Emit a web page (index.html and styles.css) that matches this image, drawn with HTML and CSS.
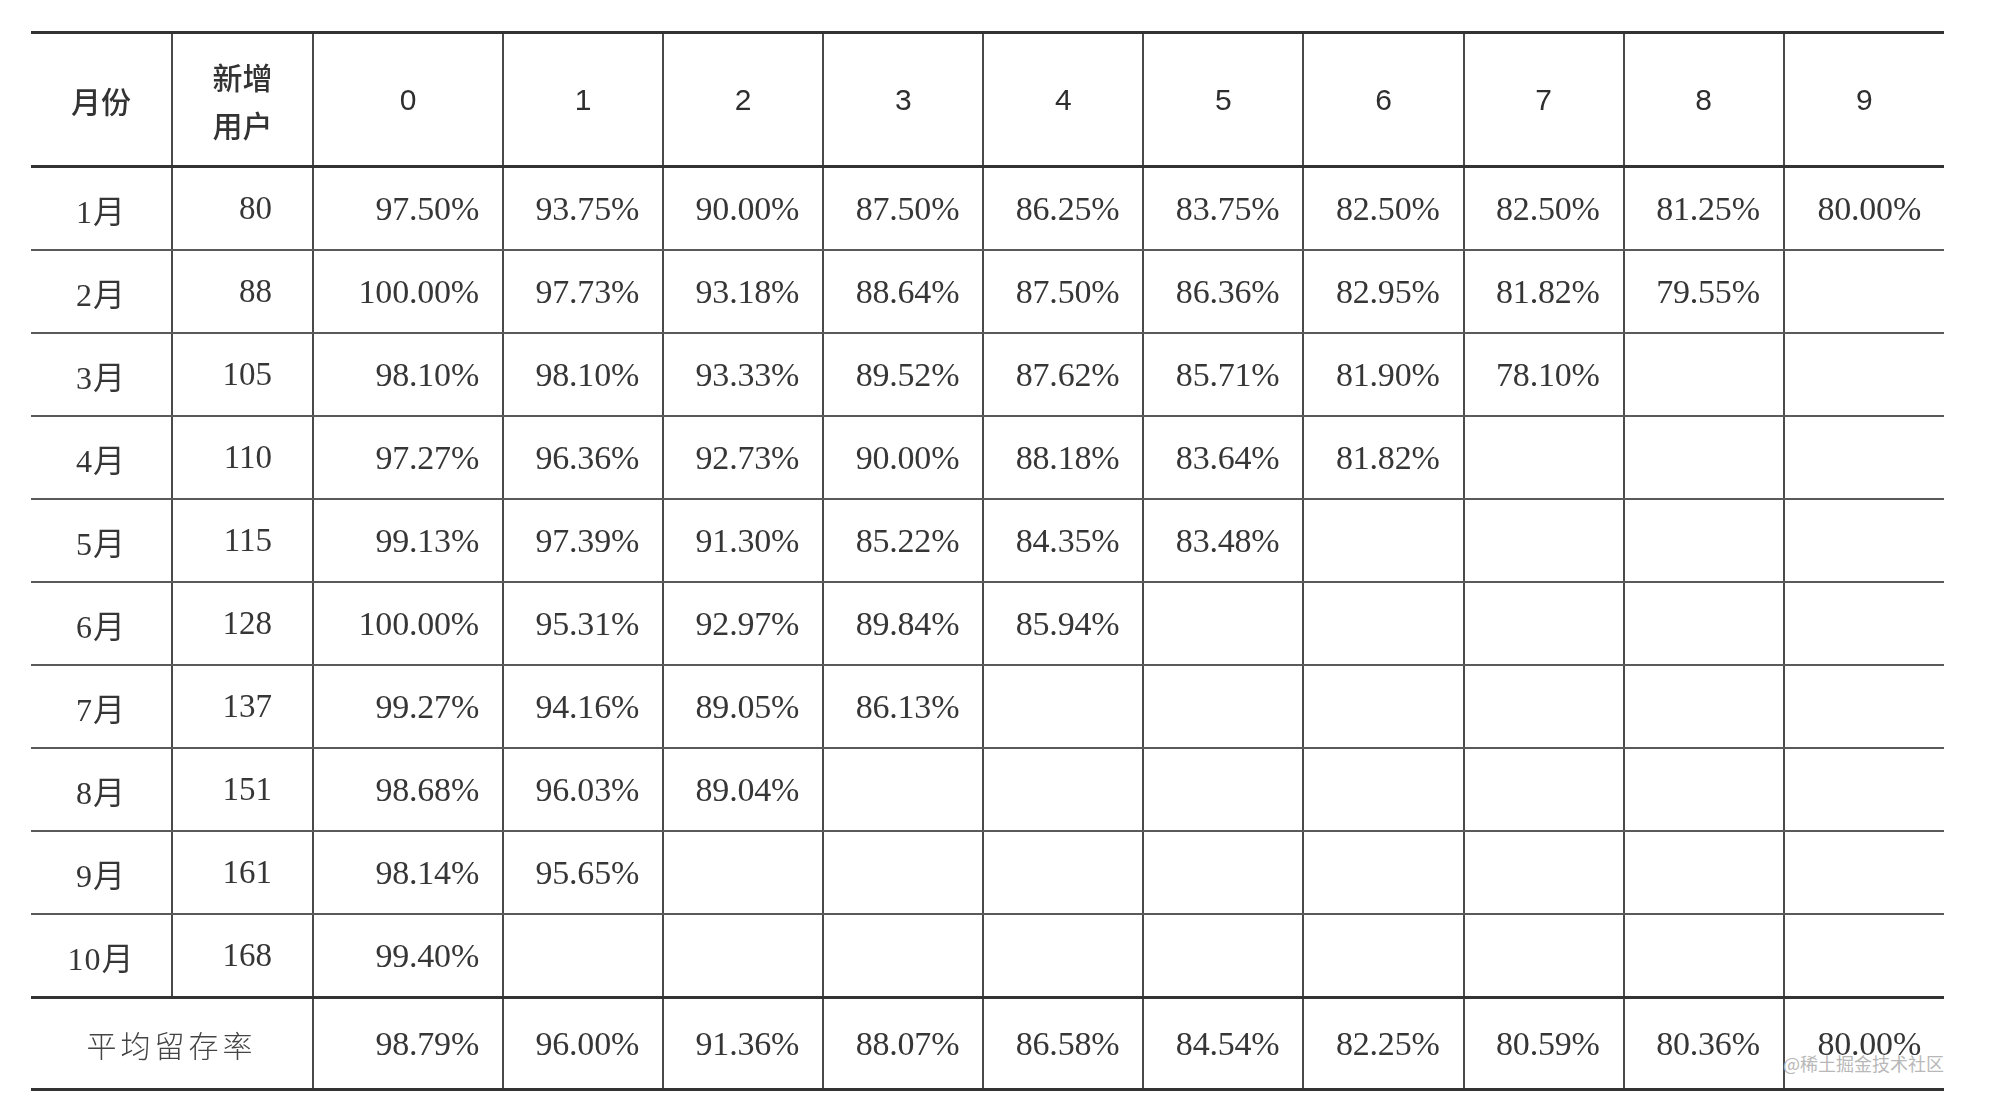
FILE: index.html
```html
<!DOCTYPE html>
<html lang="zh-CN">
<head>
<meta charset="utf-8">
<title>月份留存率</title>
<link rel="stylesheet" href="styles.css">
</head>
<body>
<div class="sheet">
<table class="retention">
  <colgroup>
    <col class="c-month"><col class="c-new"><col class="c-zero">
    <col class="c-n"><col class="c-n"><col class="c-n"><col class="c-n"><col class="c-n">
    <col class="c-n"><col class="c-n"><col class="c-n"><col class="c-n">
  </colgroup>
  <thead>
    <tr class="head">
      <th class="lbl">月份</th>
      <th class="lbl two">新增<br>用户</th>
      <th class="num-h lt">0</th>
      <th class="num-h">1</th>
      <th class="num-h">2</th>
      <th class="num-h">3</th>
      <th class="num-h">4</th>
      <th class="num-h">5</th>
      <th class="num-h">6</th>
      <th class="num-h lt">7</th>
      <th class="num-h">8</th>
      <th class="num-h last">9</th>
    </tr>
  </thead>
  <tbody>
    <tr><td class="m">1月</td><td class="u">80</td><td class="p lt">97.50%</td><td class="p">93.75%</td><td class="p">90.00%</td><td class="p">87.50%</td><td class="p">86.25%</td><td class="p">83.75%</td><td class="p">82.50%</td><td class="p lt">82.50%</td><td class="p">81.25%</td><td class="p last">80.00%</td></tr>
    <tr><td class="m">2月</td><td class="u">88</td><td class="p lt">100.00%</td><td class="p">97.73%</td><td class="p">93.18%</td><td class="p">88.64%</td><td class="p">87.50%</td><td class="p">86.36%</td><td class="p">82.95%</td><td class="p lt">81.82%</td><td class="p">79.55%</td><td class="p last"></td></tr>
    <tr><td class="m">3月</td><td class="u">105</td><td class="p lt">98.10%</td><td class="p">98.10%</td><td class="p">93.33%</td><td class="p">89.52%</td><td class="p">87.62%</td><td class="p">85.71%</td><td class="p">81.90%</td><td class="p lt">78.10%</td><td class="p"></td><td class="p last"></td></tr>
    <tr><td class="m">4月</td><td class="u">110</td><td class="p lt">97.27%</td><td class="p">96.36%</td><td class="p">92.73%</td><td class="p">90.00%</td><td class="p">88.18%</td><td class="p">83.64%</td><td class="p">81.82%</td><td class="p lt"></td><td class="p"></td><td class="p last"></td></tr>
    <tr><td class="m">5月</td><td class="u">115</td><td class="p lt">99.13%</td><td class="p">97.39%</td><td class="p">91.30%</td><td class="p">85.22%</td><td class="p">84.35%</td><td class="p">83.48%</td><td class="p"></td><td class="p lt"></td><td class="p"></td><td class="p last"></td></tr>
    <tr><td class="m">6月</td><td class="u">128</td><td class="p lt">100.00%</td><td class="p">95.31%</td><td class="p">92.97%</td><td class="p">89.84%</td><td class="p">85.94%</td><td class="p"></td><td class="p"></td><td class="p lt"></td><td class="p"></td><td class="p last"></td></tr>
    <tr><td class="m">7月</td><td class="u">137</td><td class="p lt">99.27%</td><td class="p">94.16%</td><td class="p">89.05%</td><td class="p">86.13%</td><td class="p"></td><td class="p"></td><td class="p"></td><td class="p lt"></td><td class="p"></td><td class="p last"></td></tr>
    <tr><td class="m">8月</td><td class="u">151</td><td class="p lt">98.68%</td><td class="p">96.03%</td><td class="p">89.04%</td><td class="p"></td><td class="p"></td><td class="p"></td><td class="p"></td><td class="p lt"></td><td class="p"></td><td class="p last"></td></tr>
    <tr><td class="m">9月</td><td class="u">161</td><td class="p lt">98.14%</td><td class="p">95.65%</td><td class="p"></td><td class="p"></td><td class="p"></td><td class="p"></td><td class="p"></td><td class="p lt"></td><td class="p"></td><td class="p last"></td></tr>
    <tr><td class="m">10月</td><td class="u">168</td><td class="p lt">99.40%</td><td class="p"></td><td class="p"></td><td class="p"></td><td class="p"></td><td class="p"></td><td class="p"></td><td class="p lt"></td><td class="p"></td><td class="p last"></td></tr>
  </tbody>
  <tfoot>
    <tr class="foot">
      <td class="avg" colspan="2">平均留存率</td>
      <td class="p lt">98.79%</td><td class="p">96.00%</td><td class="p">91.36%</td><td class="p">88.07%</td><td class="p">86.58%</td><td class="p">84.54%</td><td class="p">82.25%</td><td class="p lt">80.59%</td><td class="p">80.36%</td><td class="p last">80.00%</td>
    </tr>
  </tfoot>
</table>
<span class="watermark">@稀土掘金技术社区</span>
</div>
</body>
</html>
```

FILE: styles.css
```css
html, body {
  margin: 0;
  padding: 0;
  background: #ffffff;
}

.sheet {
  position: relative;
  width: 1990px;
  height: 1098px;
  padding: 31px 0 0 31px;
  box-sizing: border-box;
}

.retention {
  border-collapse: collapse;
  table-layout: fixed;
  width: 1913px;
  color: #363636;
  filter: blur(0.45px);
}

.c-month { width: 141px; }
.c-new { width: 141px; }
.c-zero { width: 190px; }
.c-n { width: 160.1px; }

.retention th,
.retention td {
  border-left: 2px solid #4a4a4a;
  border-right: 2px solid #4a4a4a;
  border-top: 2px solid #5a5a5a;
  border-bottom: 2px solid #5a5a5a;
  padding: 0;
  vertical-align: middle;
}

.retention th:first-child,
.retention td:first-child {
  border-left: none;
}

.retention .last {
  border-right: none;
}

.retention .lt {
  border-left-color: #7d7d7d;
}

.retention .head th {
  height: 131px;
  border-top: 3px solid #333333;
  border-bottom: 3px solid #333333;
}

.retention .lbl {
  font-family: "Noto Sans CJK SC", "Noto Sans", sans-serif;
  font-weight: 500;
  font-size: 30px;
  text-align: center;
  color: #333333;
}

.retention .two {
  line-height: 48px;
}

.retention .num-h {
  font-family: "Liberation Sans", Arial, sans-serif;
  font-weight: normal;
  font-size: 30px;
  text-align: center;
  color: #2e2e2e;
}

.retention tbody td {
  height: 81px;
}

.retention .m {
  font-family: "Liberation Serif", "Noto Sans CJK SC", serif;
  font-size: 32px;
  text-align: center;
  letter-spacing: 1px;
}

.retention .u {
  font-family: "Liberation Serif", serif;
  font-size: 33px;
  text-align: right;
  padding-right: 40px;
}

.retention .p {
  font-family: "Liberation Serif", serif;
  font-size: 34px;
  text-align: right;
  padding-right: 23px;
  letter-spacing: -0.2px;
}

.retention .foot td {
  height: 89px;
  border-top: 3px solid #333333;
  border-bottom: 3px solid #333333;
}

.retention .avg {
  font-family: "Noto Sans CJK SC", sans-serif;
  font-size: 30px;
  font-weight: 300;
  text-align: center;
  letter-spacing: 4px;
  color: #444444;
}

.watermark {
  position: absolute;
  left: 1783px;
  top: 1054px;
  font-family: "Noto Sans CJK SC", sans-serif;
  font-size: 18px;
  line-height: 18px;
  color: #b8b8b8;
  white-space: nowrap;
}
```
